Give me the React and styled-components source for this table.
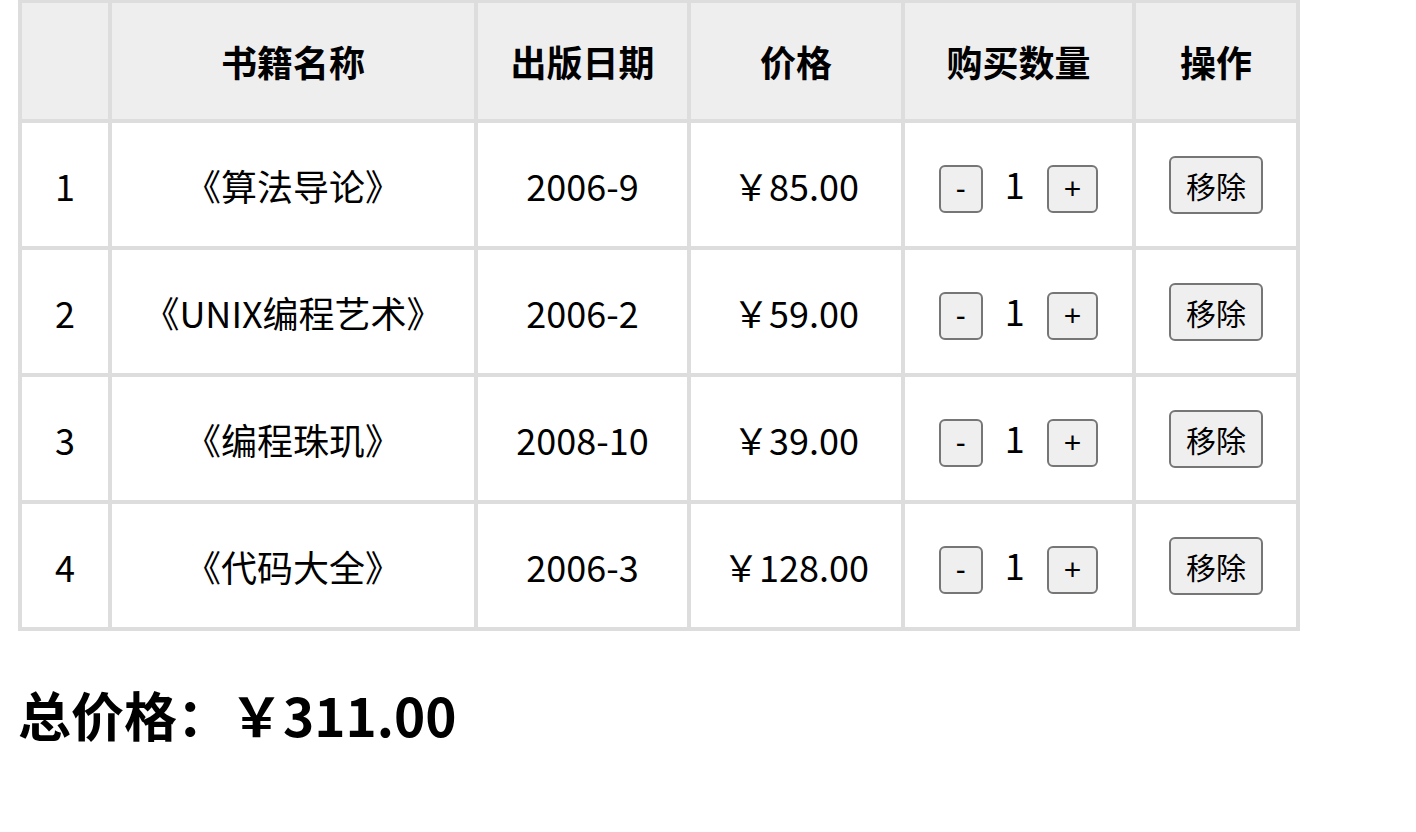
import React, { useState } from 'react';
import styled, { createGlobalStyle } from 'styled-components';

const GlobalStyle = createGlobalStyle`
  body {
    margin: 0;
    background: #fff;
    color: #000;
    font-family: "Noto Sans CJK SC", "Noto Sans", sans-serif;
  }
`;

const initialBooks = [
  { id: 1, name: '《算法导论》', date: '2006-9', price: 85.0, count: 1 },
  { id: 2, name: '《UNIX编程艺术》', date: '2006-2', price: 59.0, count: 1 },
  { id: 3, name: '《编程珠玑》', date: '2008-10', price: 39.0, count: 1 },
  { id: 4, name: '《代码大全》', date: '2006-3', price: 128.0, count: 1 },
];

const columns = [
  { title: '', width: 86 },
  { title: '书籍名称', width: 362 },
  { title: '出版日期', width: 209 },
  { title: '价格', width: 210 },
  { title: '购买数量', width: 227 },
  { title: '操作', width: 160 },
];

const showPrice = (price) => '￥' + price.toFixed(2);

const App = () => {
  const [books, setBooks] = useState(initialBooks);

  const changeCount = (index, step) => {
    setBooks(books.map((book, i) => (i === index ? { ...book, count: book.count + step } : book)));
  };

  const removeBook = (index) => {
    setBooks(books.filter((_, i) => i !== index));
  };

  const totalPrice = books.reduce((sum, book) => sum + book.price * book.count, 0);

  return (
    <Page>
      <GlobalStyle />
      <Table>
        <thead>
          <tr>
            {columns.map((col, i) => (
              <HeadCell key={i} $w={col.width}>{col.title}</HeadCell>
            ))}
          </tr>
        </thead>
        <tbody>
          {books.map((book, index) => (
            <tr key={book.id}>
              <Cell>{book.id}</Cell>
              <Cell>{book.name}</Cell>
              <Cell>{book.date}</Cell>
              <Cell>{showPrice(book.price)}</Cell>
              <Cell>
                <Counter>
                  <Button disabled={book.count <= 1} onClick={() => changeCount(index, -1)}>-</Button>
                  <span>{book.count}</span>
                  <Button onClick={() => changeCount(index, 1)}>+</Button>
                </Counter>
              </Cell>
              <Cell>
                <Button onClick={() => removeBook(index)}>移除</Button>
              </Cell>
            </tr>
          ))}
        </tbody>
      </Table>
      <Total>总价格：{showPrice(totalPrice)}</Total>
    </Page>
  );
};

const Page = styled.div`
  padding: 0 18px;
`;

const Table = styled.table`
  border-collapse: collapse;
  table-layout: fixed;
  border: 4px solid #ddd;
  border-top-width: 3px;
`;

const HeadCell = styled.th`
  width: ${(p) => p.$w}px;
  padding: 32px 0;
  border: 4px solid #ddd;
  border-top-width: 3px;
  background: #eee;
  font-size: 36px;
  font-weight: 700;
  color: #000;
  text-align: center;
`;

const Cell = styled.td`
  padding: 33px 0 32px;
  border: 4px solid #ddd;
  font-size: 36px;
  text-align: center;
`;

const Counter = styled.div`
  display: inline-flex;
  align-items: baseline;
  gap: 22px;
`;

const Button = styled.button`
  font-family: "Liberation Sans", "Noto Sans CJK SC", sans-serif;
  font-size: 30px;
  color: #000;
  padding: 5px 15px;
  border: 2px solid #767676;
  border-radius: 6px;
  background: #efefef;
  cursor: pointer;

  &:disabled {
    color: #000;
    cursor: default;
  }
`;

const Total = styled.h2`
  margin: 45px 0;
  font-size: 53px;
  font-weight: 700;
`;

export default App;
